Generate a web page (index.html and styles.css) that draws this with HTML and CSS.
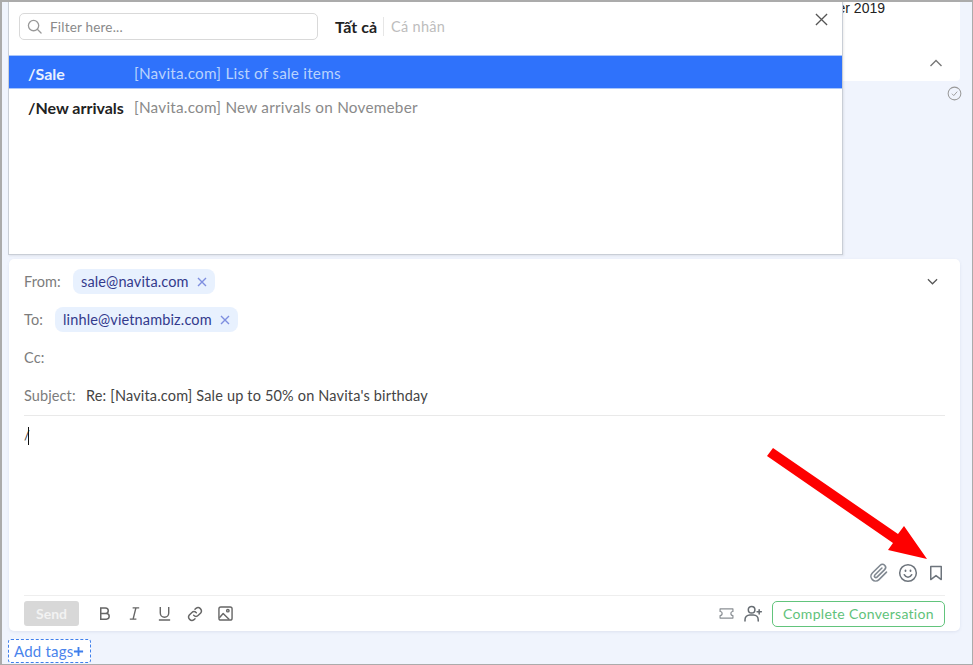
FILE: index.html
```html
<!DOCTYPE html>
<html lang="vi">
<head>
<meta charset="utf-8">
<title>Compose</title>
<link rel="stylesheet" href="styles.css">
</head>
<body>
<div class="app">
  <section class="message">
    <p class="message-date">Sent on 15 November 2019</p>
    <svg class="message-toggle" viewBox="0 0 14 8" width="14" height="8"><path d="M1.5 7 7 1.5 12.5 7" fill="none" stroke="#777" stroke-width="1.4"/></svg>
  </section>
  <div class="status">
    <svg viewBox="0 0 16 16" width="15" height="15"><circle cx="8" cy="8" r="6.8" fill="none" stroke="#999" stroke-width="1.1"/><path d="M5.2 8.2 7.2 10.2 10.9 6" fill="none" stroke="#999" stroke-width="1"/></svg>
  </div>

  <section class="composer">
    <div class="field field-from">
      <span class="label">From:</span>
      <span class="chip">sale@navita.com <svg class="chip-x" viewBox="0 0 10 10" width="10" height="10"><path d="M1 1 9 9M9 1 1 9" stroke="#7e8ee0" stroke-width="1.4"/></svg></span>
      <svg class="collapse" viewBox="0 0 12 7" width="11" height="7"><path d="M1 1 6 6 11 1" fill="none" stroke="#555" stroke-width="1.3"/></svg>
    </div>
    <div class="field field-to">
      <span class="label">To:</span>
      <span class="chip">linhle@vietnambiz.com <svg class="chip-x" viewBox="0 0 10 10" width="10" height="10"><path d="M1 1 9 9M9 1 1 9" stroke="#7e8ee0" stroke-width="1.4"/></svg></span>
    </div>
    <div class="field"><span class="label">Cc:</span></div>
    <div class="field field-subject">
      <span class="label">Subject:</span>
      <span class="subject">Re: [Navita.com] Sale up to 50% on Navita's birthday</span>
    </div>
    <div class="editor">
      <div class="editor-text"><span class="slash">/</span><span class="caret"></span></div>
      <div class="editor-tools">
        <svg viewBox="0 0 24 24" width="20" height="20" fill="none" stroke="#7f8790" stroke-width="1.9" stroke-linecap="round" stroke-linejoin="round"><path d="M21 11 12 20a5.5 5.5 0 0 1-8-8l9.5-9.3a3.7 3.7 0 0 1 5.3 5.2L9.6 17a1.8 1.8 0 0 1-2.6-2.6L15.5 6"/></svg>
        <svg viewBox="0 0 24 24" width="20" height="20" fill="none" stroke="#6d747c" stroke-width="1.8" stroke-linecap="round"><circle cx="12" cy="12" r="10"/><path d="M7.5 14c1 2 2.700 3 4.500 3s3.500-1 4.500-3"/><path d="M9 9v.6M15 9v.6" stroke-width="2.200"/></svg>
        <svg class="bookmark" viewBox="0 0 16 18" width="14" height="16" fill="none" stroke="#6d747c" stroke-width="1.700" stroke-linejoin="round"><path d="M2 1.500h12v15l-6-4.500-6 4.500z"/></svg>
      </div>
    </div>
    <div class="toolbar">
      <button class="send" type="button">Send</button>
      <div class="format">
        <svg viewBox="0 0 16 16" width="15" height="15" fill="none" stroke="#666" stroke-width="1.600"><path d="M4 2h5a3 3 0 0 1 0 6H4zM4 8h6a3 3 0 0 1 0 6H4z"/></svg>
        <svg viewBox="0 0 16 16" width="15" height="15" fill="none" stroke="#666" stroke-width="1.500"><path d="M6 2h7M3 14h7M9.500 2 6.500 14"/></svg>
        <svg viewBox="0 0 16 16" width="15" height="15" fill="none" stroke="#666" stroke-width="1.500"><path d="M3.500 1v6.500a4.500 4.500 0 0 0 9 0V1M2 15h12"/></svg>
        <svg viewBox="0 0 24 24" width="16" height="16" fill="none" stroke="#666" stroke-width="2.200" stroke-linecap="round"><path d="M10 14a5 5 0 0 0 7 0l3.500-3.500a5 5 0 0 0-7-7L12 5"/><path d="M14 10a5 5 0 0 0-7 0l-3.500 3.500a5 5 0 0 0 7 7L12 19"/></svg>
        <svg viewBox="0 0 16 16" width="15" height="15" fill="none" stroke="#666" stroke-width="1.500" stroke-linejoin="round"><rect x="1" y="1" width="14" height="14" rx="2"/><circle cx="10.500" cy="5" r="1.300"/><path d="M1.500 12.500 5.500 8l6.500 6.500"/></svg>
      </div>
      <div class="actions">
        <svg viewBox="0 0 16 12" width="15" height="11" fill="none" stroke="#8a8f94" stroke-width="1.300" stroke-linejoin="round"><path d="M1 1h14v2.800a2.200 2.200 0 0 0 0 4.400V11H1V8.200a2.200 2.200 0 0 0 0-4.400z"/></svg>
        <svg viewBox="0 0 20 18" width="19" height="17" fill="none" stroke="#666c72" stroke-width="1.600" stroke-linecap="round"><circle cx="8" cy="5" r="3.500"/><path d="M1 17v-1.500a5 5 0 0 1 5-5h4a5 5 0 0 1 5 5V17M16 5v4.500M13.800 7.200h4.500"/></svg>
        <button class="complete" type="button">Complete Conversation</button>
      </div>
    </div>
  </section>

  <div class="tags">
    <span class="add-tags">Add tags<svg viewBox="0 0 12 12" width="11" height="11"><path d="M6 1v10M1 6h10" stroke="#3f7fec" stroke-width="2"/></svg></span>
  </div>

  <section class="picker">
    <div class="picker-head">
      <label class="filter">
        <svg viewBox="0 0 16 16" width="15" height="15" fill="none" stroke="#999" stroke-width="1.400" stroke-linecap="round"><circle cx="7" cy="7" r="5.500"/><path d="M11 11l4 4"/></svg>
        <span>Filter here...</span>
      </label>
      <div class="tabs"><span class="tab-active">Tất cả</span><span class="tab">Cá nhân</span></div>
      <svg class="picker-close" viewBox="0 0 14 14" width="13" height="13"><path d="M1 1 13 13M13 1 1 13" stroke="#555" stroke-width="1.400"/></svg>
    </div>
    <div class="item item-active"><b>/Sale</b><span>[Navita.com] List of sale items</span></div>
    <div class="item"><b>/New arrivals</b><span>[Navita.com] New arrivals on Novemeber</span></div>
  </section>

  <svg class="arrow" viewBox="0 0 973 665" width="973" height="665"><path d="M767 456 773 448 898 534 904 526 927 559 888 550 893 543z" fill="#fe0000"/></svg>
</div>
</body>
</html>
```
FILE: styles.css
```css
* { box-sizing: border-box; }
html, body { margin: 0; padding: 0; }
body { width: 973px; height: 665px; overflow: hidden; font-family: "Lato", "Noto Sans", sans-serif; }
.app {
  position: relative; width: 973px; height: 665px; overflow: hidden;
  background: #f0f4fd;
  border: solid #ababab; border-width: 2px 1px 1px 2px;
  padding: 0 12px 0 7px;
  display: flex; flex-direction: column;
}
.message {
  flex: none; height: 79px; background: #fff; border-radius: 0 0 4px 4px;
  display: flex; flex-direction: column; align-items: flex-end;
  padding: 0 17px 0 0; position: relative;
}
.message-date { margin: -4px 58px 0 0; font: 14px/20px "Liberation Sans", sans-serif; color: #222; }
.message-toggle { margin-top: 41px; }
.status { flex: none; height: 178px; display: flex; justify-content: flex-end; padding: 5px 0 0; margin-right: -2px; }
.composer {
  flex: none; height: 372px; background: #fff; border-radius: 5px;
  box-shadow: 0 1px 3px rgba(90,110,150,.12);
  padding: 4px 15px 0;
  display: flex; flex-direction: column;
  font-size: 14.500px; color: #777;
}
.field { height: 38px; display: flex; align-items: center; }
.label { color: #7c7c7c; font-size: 14.500px; letter-spacing: .1px; }
.field-from .label { width: 49px; }
.field-to .label { width: 31px; }
.field-subject .label { width: 62px; }
.chip {
  display: inline-flex; align-items: center; gap: 8px;
  height: 25px; padding: 0 8px; border-radius: 8px;
  background: #e8f1fe; color: #333a8c; font-size: 14.500px; letter-spacing: .14px;
}
.collapse { margin-left: auto; margin-right: 7px; }
.subject { color: #444; letter-spacing: .17px; }
.editor {
  height: 181px; border-top: 1px solid #e9e9e9;
  display: flex; flex-direction: column; justify-content: space-between;
}
.editor-text { padding-top: 11px; height: 30px; display: flex; color: #333; font-size: 13px; line-height: 17px; }
.caret { width: 1px; height: 18px; background: #111; margin-left: -2px; }
.editor-tools { display: flex; justify-content: flex-end; align-items: center; gap: 9px; height: 24px; padding-right: 2px; margin-bottom: 10px; }
.bookmark { margin-left: 2px; }
.toolbar {
  height: 36px; border-top: 1px solid #eee; display: flex; align-items: center;
}
.send {
  width: 55px; height: 25px; border: 0; border-radius: 3px; background: #d8d8d8; color: #f2f2f2;
  font: 700 14px "Lato", sans-serif; padding: 0;
}
.format { display: flex; align-items: center; gap: 15px; margin-left: 18px; }
.actions { margin-left: auto; display: flex; align-items: center; }
.actions svg:nth-child(2) { margin-left: 10px; }
.complete {
  width: 173px; height: 26px; margin-left: 9px; border: 1px solid #62c47c; border-radius: 5px; background: #fff;
  color: #5fc27a; font: 14px "Lato", sans-serif; letter-spacing: .3px; padding: 0;
}
.tags { flex: none; padding: 8px 0 0; margin-left: -1px; }
.add-tags {
  display: inline-flex; align-items: center; width: 83px; height: 24px; padding: 0 4px 0 5px;
  border: 1px dashed #3f7fec; border-radius: 3px; background: #fff; white-space: nowrap;
  color: #4a84ec; font-size: 15px; letter-spacing: .2px;
}
.add-tags svg { flex: none; }
.picker {
  position: absolute; left: 6px; top: -2px; width: 835px; height: 255px;
  background: #fff; border: 1px solid #c9ced6; border-top: 0;
  box-shadow: 1px 1px 2px rgba(0,0,0,.08);
}
.picker-head { height: 55px; position: relative; display: flex; align-items: center; padding: 0 10px 2px; }
.filter {
  width: 299px; height: 27px; border: 1px solid #d9d9d9; border-radius: 5px;
  display: flex; align-items: center; gap: 8px; padding: 0 7px;
  color: #8a8a8a; font-size: 13.500px; letter-spacing: .2px;
}
.tabs { display: flex; align-items: center; margin-left: 17px; font-size: 14.500px; }
.tab-active { font-weight: 700; color: #222; font-size: 16px; padding-right: 6px; border-right: 1px solid #e6e6e6; }
.tab { color: #bdbdbd; padding-left: 7px; letter-spacing: .3px; }
.picker-close { position: absolute; left: 806px; top: 13px; }
.item { height: 34px; display: flex; align-items: center; padding: 2px 19px 0; color: #8a8a8a; font-size: 15.300px; }
.item b { width: 106px; flex: none; color: #222; font-weight: 700; white-space: nowrap; font-size: 16px; }
.item span { letter-spacing: .23px; }
.item-active { background: #2f72fb; color: #b9d2fd; border-top: 1px solid #a9c6fb; border-bottom: 1px solid #a9c6fb; }
.item-active b { color: #e8f0ff; }
.arrow { position: absolute; left: -2px; top: -2px; pointer-events: none; }
```
